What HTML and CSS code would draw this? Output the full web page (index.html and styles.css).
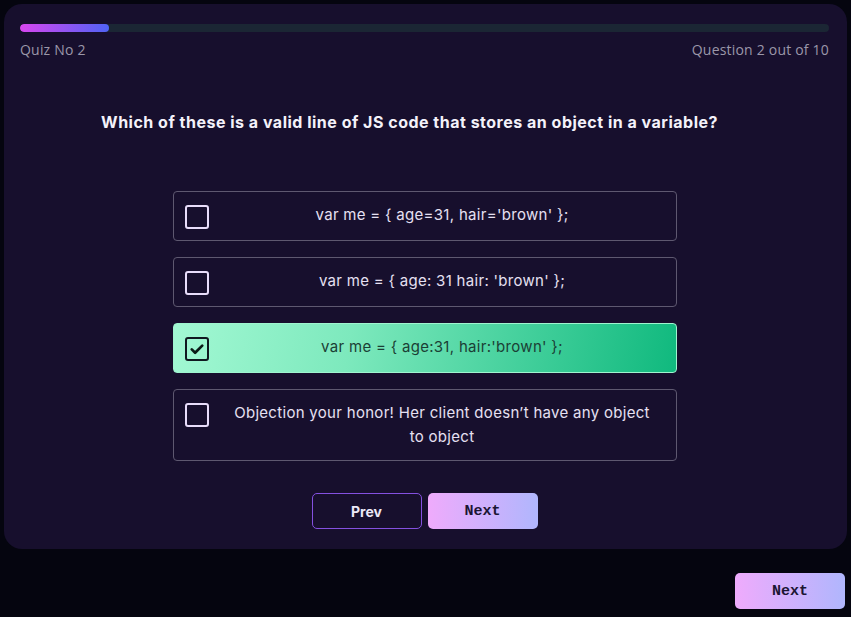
FILE: index.html
```html
<!DOCTYPE html>
<html>
<head>
<meta charset="utf-8">
<link rel="stylesheet" href="styles.css">
</head>
<body>
<div class="page">
  <section class="card">
    <div class="progress"><div class="progress-fill" style="width:89px"></div></div>
    <div class="meta">
      <span>Quiz No 2</span>
      <span>Question 2 out of 10</span>
    </div>
    <h1 class="question">Which of these is a valid line of JS code that stores an object in a variable?</h1>
    <div class="options">
      <div class="option">
        <span class="box"></span>
        <span class="label">var me = { age=31, hair='brown' };</span>
      </div>
      <div class="option">
        <span class="box"></span>
        <span class="label">var me = { age: 31 hair: 'brown' };</span>
      </div>
      <div class="option selected">
        <span class="box">
          <svg viewBox="0 0 24 24" width="18" height="18"><path d="M5 12.5l4.5 4.5L19 7.5" fill="none" stroke="#0b1a16" stroke-width="3.6" stroke-linecap="round" stroke-linejoin="round"/></svg>
        </span>
        <span class="label">var me = { age:31, hair:'brown' };</span>
      </div>
      <div class="option">
        <span class="box"></span>
        <span class="label">Objection your honor! Her client doesn’t have any object to&nbsp;object</span>
      </div>
    </div>
    <div class="nav">
      <button class="btn btn-outline">Prev</button>
      <button class="btn btn-grad">Next</button>
    </div>
  </section>
  <div class="footer">
    <button class="btn btn-grad">Next</button>
  </div>
</div>
</body>
</html>
```
FILE: styles.css
```css
* { box-sizing: border-box; }
html, body { margin: 0; padding: 0; background: #05050f; }
body { font-family: "Inter", "Noto Sans", sans-serif; color: #fff; }
.page { padding: 4px; }
.card {
  background: #170f2d;
  border-radius: 18px;
  padding: 20px 18px 20px 16px;
  display: flex;
  flex-direction: column;
}
.progress { height: 8px; border-radius: 4px; background: #1b2634; overflow: hidden; }
.progress-fill { height: 100%; border-radius: 4px; background: linear-gradient(90deg, #d946ef, #4f63f5); }
.meta {
  display: flex; justify-content: space-between;
  margin-top: 9px;
  font-size: 14px; line-height: 18px; color: #9b97a9;
  font-family: "Open Sans", "Noto Sans", sans-serif;
  letter-spacing: 0.2px;
}
.question {
  margin: 51px 0 0; padding-right: 30px;
  font-size: 16px; line-height: 24px; font-weight: 700;
  text-align: center; color: #f4f2fa; letter-spacing: 0.5px;
}
.options {
  align-self: center; width: 504px; margin-top: 57px;
  display: flex; flex-direction: column; gap: 16px;
}
.option {
  display: flex; align-items: flex-start;
  min-height: 50px;
  padding: 11px 12px 11px 11px;
  border: 1px solid #5e5870; border-radius: 4px;
  font-size: 15px; line-height: 24px; color: #e6e0f2; letter-spacing: 0.3px;
}
.box {
  flex: none; width: 24px; height: 24px; margin-top: 2px;
  border: 2px solid #e8dcfa; border-radius: 3px;
  display: flex; align-items: center; justify-content: center;
}
.label { flex: 1; text-align: center; padding: 0 0 0 12px; }
.option.selected {
  border-color: #9ff5cf;
  background: linear-gradient(100deg, #a2f8d3 0%, #7de9bd 35%, #10b97e 100%);
  color: #1b3f35;
}
.option.selected .box { border-color: #101820; }
.nav { display: flex; justify-content: center; gap: 6px; margin-top: 32px; }
.btn {
  width: 110px; height: 36px; border-radius: 5px;
  font-size: 14px; font-weight: 700; cursor: pointer;
}
.btn-outline { background: transparent; border: 1px solid #8450e0; color: #ece8f6; font-family: "Inter", sans-serif; }
.btn-grad {
  border: none; color: #1b1533;
  background: linear-gradient(90deg, #efabfc, #b0b6fd);
  font-family: "Liberation Mono", "DejaVu Sans Mono", monospace; font-size: 15px;
}
.footer { display: flex; justify-content: flex-end; margin-top: 24px; padding-right: 2px; }
```
